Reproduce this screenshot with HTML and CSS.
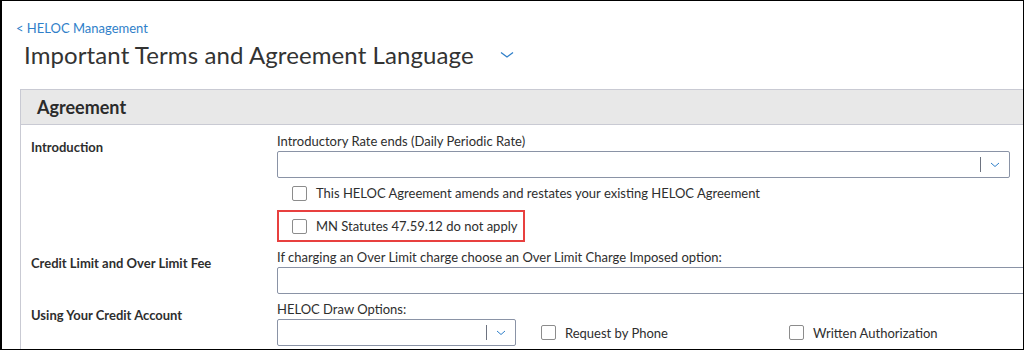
FILE: index.html
```html
<!DOCTYPE html>
<html lang="en">
<head>
  <meta charset="UTF-8" />
  <title>Important Terms and Agreement Language</title>
  <link rel="stylesheet" href="styles.css">
</head>
<body>
  <div class="frame">
    <a class="back-link" href="#">&lt; HELOC Management</a>
    <div class="title-row">
      <h1>Important Terms and Agreement Language</h1>
      <svg class="title-chevron" width="14" height="8" viewBox="0 0 14 8"><path d="M1 1.5 L7 6 L13 1.5" fill="none" stroke="#2f7fc9" stroke-width="1.3"/></svg>
    </div>

    <div class="card">
      <div class="card-header">Agreement</div>

      <div class="row row-first">
        <div class="row-label">Introduction</div>
        <div class="fields">
          <div class="field-label">Introductory Rate ends (Daily Periodic Rate)</div>
          <div class="select select-wide">
            <span class="select-divider"></span>
            <svg class="select-chevron" width="10" height="6" viewBox="0 0 10 6"><path d="M1 1 L5 4.5 L9 1" fill="none" stroke="#2f7fc9" stroke-width="1"/></svg>
          </div>
          <label class="check">
            <span class="box"></span>This HELOC Agreement amends and restates your existing HELOC Agreement
          </label>
          <label class="check check-flagged">
            <span class="box"></span>MN Statutes 47.59.12 do not apply
          </label>
        </div>
      </div>

      <div class="row">
        <div class="row-label">Credit Limit and Over Limit Fee</div>
        <div class="fields">
          <div class="field-label">If charging an Over Limit charge choose an Over Limit Charge Imposed option:</div>
          <div class="text-input"></div>
        </div>
      </div>

      <div class="row">
        <div class="row-label">Using Your Credit Account</div>
        <div class="fields">
          <div class="field-label">HELOC Draw Options:</div>
          <div class="inline-fields">
            <div class="select select-narrow">
              <span class="select-divider"></span>
              <svg class="select-chevron" width="10" height="6" viewBox="0 0 10 6"><path d="M1 1 L5 4.5 L9 1" fill="none" stroke="#2f7fc9" stroke-width="1"/></svg>
            </div>
            <label class="check check-option"><span class="box"></span>Request by Phone</label>
            <label class="check check-option"><span class="box"></span>Written Authorization</label>
          </div>
        </div>
      </div>
    </div>
  </div>
</body>
</html>
```

FILE: styles.css
```css
body {
  margin: 0;
  font-family: "Lato", "Open Sans", sans-serif;
  color: #2e2e2e;
  background: #fff;
}

.frame {
  width: 1024px;
  height: 350px;
  box-sizing: border-box;
  border: 1px solid #000;
  border-left-width: 2px;
  overflow: hidden;
  padding: 19px 0 0 14px;
}

.back-link {
  display: block;
  font-size: 13px;
  line-height: 16px;
  color: #2f7fc9;
  text-decoration: none;
}

.title-row {
  display: flex;
  align-items: center;
  height: 36px;
  padding-left: 8px;
}

.title-row h1 {
  margin: 0;
  font-size: 24px;
  font-weight: 400;
  letter-spacing: 0.1px;
  color: #333;
}

.title-chevron {
  margin-left: 26px;
  margin-top: 2px;
}

.card {
  width: 1100px;
  margin-top: 17px;
  margin-left: 4px;
  border-left: 1px solid #c9cad3;
  min-height: 300px;
}

.card-header {
  height: 34px;
  line-height: 34px;
  background: #e8e8e8;
  border-top: 1px solid #c9cad3;
  border-bottom: 1px solid #c9cad3;
  padding-left: 16px;
  font-size: 18px;
  font-weight: 700;
  color: #2b2b2b;
}

.row {
  display: flex;
  padding-top: 7px;
}

.row-first {
  padding-top: 8px;
}

.row-label {
  width: 246px;
  flex: none;
  padding-left: 10px;
  margin-top: 6px;
  font-size: 13px;
  line-height: 16px;
  font-weight: 700;
}

.fields {
  flex: 1;
}

.field-label {
  font-size: 13px;
  line-height: 16px;
  margin-bottom: 2px;
}

.select,
.text-input {
  box-sizing: border-box;
  height: 27px;
  border: 1px solid #8a93a6;
  border-radius: 2px;
  background: #fff;
}

.select {
  display: flex;
  align-items: center;
  justify-content: flex-end;
}

.select-wide {
  width: 733px;
}

.select-narrow {
  width: 239px;
  flex: none;
}

.select-divider {
  width: 1px;
  height: 15px;
  background: #6d7380;
}

.select-chevron {
  margin: 0 9px;
}

.text-input {
  width: 800px;
  border-radius: 2px 0 0 2px;
}

.check {
  display: flex;
  align-items: center;
  font-size: 13px;
  line-height: 18px;
  padding-left: 15px;
  margin-top: 6px;
}

.box {
  width: 15px;
  height: 15px;
  box-sizing: border-box;
  border: 1px solid #8c8c8c;
  border-radius: 2px;
  margin-right: 9px;
  flex: none;
}

.check-flagged {
  width: 248px;
  box-sizing: border-box;
  height: 32px;
  margin-top: 8px;
  border: 2px solid #e8403f;
  padding-left: 13px;
}

.inline-fields {
  display: flex;
  align-items: center;
}

.check-option {
  width: 248px;
  margin-top: 0;
  padding-left: 0;
  flex: none;
}

.select-narrow + .check-option {
  margin-left: 25px;
}
```
